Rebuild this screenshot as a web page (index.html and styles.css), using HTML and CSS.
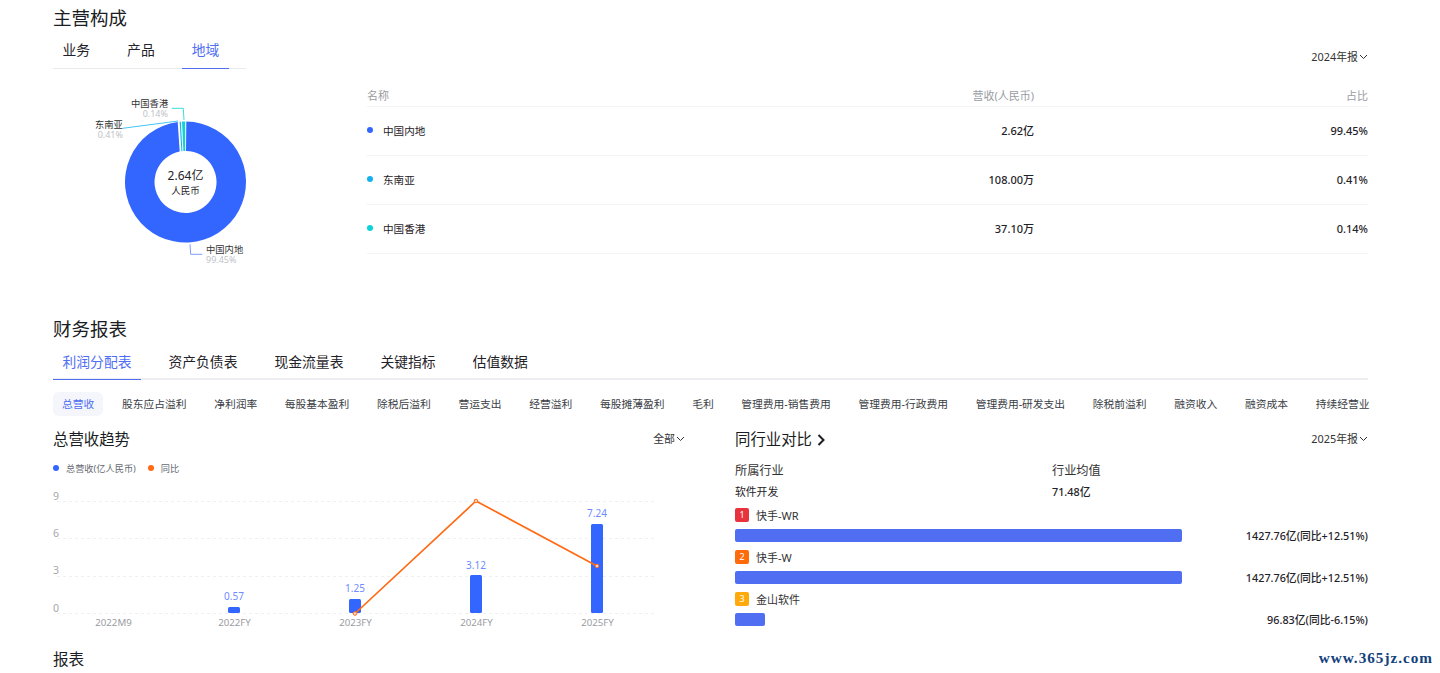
FILE: index.html
```html
<!DOCTYPE html>
<html lang="zh">
<head>
<meta charset="utf-8">
<title>主营构成</title>
<link rel="stylesheet" href="styles.css">
</head>
<body>
<main class="page">
  <section class="composition">
    <h2 class="section-title">主营构成</h2>
    <div class="comp-body">
      <div class="comp-left">
        <nav class="tabs tabs-small">
          <span class="tab">业务</span>
          <span class="tab">产品</span>
          <span class="tab active">地域</span>
        </nav>
        <svg class="donut" viewBox="53 69 200 210" width="200" height="210">
          <path d="M186.3 121.5 A60.5 60.5 0 1 1 177.7 122 L179.7 151.55 A31 31 0 1 0 186 151 Z" fill="#3366ff"/>
          <path d="M179.6 121.8 L180.9 121.7 L182.4 151.2 L181.4 151.3 Z" fill="#19b5f1"/>
          <path d="M182 121.6 L185.2 121.5 L185.2 151 L183.4 151.1 Z" fill="#0cd3d8"/>
          <polyline class="leader" points="171.7,108.3 183.3,108.3 184,120" stroke="#36dde0"/>
          <polyline class="leader" points="122.7,128.3 168.3,122.3 178,121" stroke="#43c6f5"/>
          <polyline class="leader" points="190,244.3 190.7,254.3 202.3,254.3" stroke="#7d9dff"/>
          <text class="d-name" x="131" y="106.5">中国香港</text>
          <text class="d-pct" x="168" y="116.5" text-anchor="end">0.14%</text>
          <text class="d-name" x="95" y="127.5">东南亚</text>
          <text class="d-pct" x="123" y="137.5" text-anchor="end">0.41%</text>
          <text class="d-name" x="206" y="252.5">中国内地</text>
          <text class="d-pct" x="206" y="262.5">99.45%</text>
          <text class="d-total" x="185.5" y="179.5" text-anchor="middle">2.64亿</text>
          <text class="d-unit" x="185.5" y="193.5" text-anchor="middle">人民币</text>
        </svg>
      </div>
      <div class="comp-right">
        <div class="select select-top">2024年报<svg class="chev" viewBox="0 0 9 6" width="9" height="6"><path d="M1 1l3.5 3.5L8 1"/></svg></div>
        <div class="comp-table">
          <div class="row head"><span>名称</span><span class="num">营收(人民币)</span><span class="num">占比</span></div>
          <div class="row"><span class="name"><i class="dot dot-blue"></i>中国内地</span><b class="num">2.62亿</b><b class="num">99.45%</b></div>
          <div class="row"><span class="name"><i class="dot dot-sky"></i>东南亚</span><b class="num">108.00万</b><b class="num">0.41%</b></div>
          <div class="row"><span class="name"><i class="dot dot-teal"></i>中国香港</span><b class="num">37.10万</b><b class="num">0.14%</b></div>
        </div>
      </div>
    </div>
  </section>

  <section class="finance">
    <h2 class="section-title">财务报表</h2>
    <nav class="tabs tabs-wide">
      <span class="tab active">利润分配表</span>
      <span class="tab">资产负债表</span>
      <span class="tab">现金流量表</span>
      <span class="tab">关键指标</span>
      <span class="tab">估值数据</span>
    </nav>
    <div class="chips">
      <span class="chip active">总营收</span>
      <span class="chip">股东应占溢利</span>
      <span class="chip">净利润率</span>
      <span class="chip">每股基本盈利</span>
      <span class="chip">除税后溢利</span>
      <span class="chip">营运支出</span>
      <span class="chip">经营溢利</span>
      <span class="chip">每股摊薄盈利</span>
      <span class="chip">毛利</span>
      <span class="chip">管理费用-销售费用</span>
      <span class="chip">管理费用-行政费用</span>
      <span class="chip">管理费用-研发支出</span>
      <span class="chip">除税前溢利</span>
      <span class="chip">融资收入</span>
      <span class="chip">融资成本</span>
      <span class="chip">持续经营业</span>
    </div>
    <div class="columns">
      <div class="trend">
        <div class="head-line">
          <h3 class="sub-title">总营收趋势</h3>
          <div class="select">全部<svg class="chev" viewBox="0 0 9 6" width="9" height="6"><path d="M1 1l3.5 3.5L8 1"/></svg></div>
        </div>
        <div class="legend">
          <span class="legend-item"><i class="dot dot-blue"></i>总营收(亿人民币)</span>
          <span class="legend-item"><i class="dot dot-orange"></i>同比</span>
        </div>
        <svg class="chart" viewBox="53 485 610 145" width="610" height="145">
          <g class="grid">
            <line x1="57" x2="656" y1="501.5" y2="501.5"/>
            <line x1="57" x2="656" y1="538.5" y2="538.5"/>
            <line x1="57" x2="656" y1="576.5" y2="576.5"/>
            <line x1="57" x2="656" y1="613.5" y2="613.5"/>
          </g>
          <g class="y-axis">
            <text x="53" y="500">9</text>
            <text x="53" y="537">6</text>
            <text x="53" y="574">3</text>
            <text x="53" y="612">0</text>
          </g>
          <g class="bars">
            <rect x="228" y="607" width="12" height="6" rx="1.5"/>
            <rect x="349" y="599" width="12" height="14" rx="1.5"/>
            <rect x="470" y="575" width="12" height="38" rx="1.5"/>
            <rect x="591" y="524" width="12" height="89" rx="1.5"/>
          </g>
          <g class="bar-labels">
            <text x="234" y="600">0.57</text>
            <text x="355" y="592">1.25</text>
            <text x="476" y="569">3.12</text>
            <text x="597" y="517">7.24</text>
          </g>
          <polyline class="trend-line" points="355,613.5 476,501 597,566"/>
          <circle class="pt" cx="355" cy="613.5" r="1.8"/>
          <circle class="pt" cx="476" cy="501" r="1.8"/>
          <circle class="pt" cx="597" cy="566" r="1.8"/>
          <g class="x-axis">
            <text x="113.5" y="625.5">2022M9</text>
            <text x="234.5" y="625.5">2022FY</text>
            <text x="355.5" y="625.5">2023FY</text>
            <text x="476.5" y="625.5">2024FY</text>
            <text x="597.5" y="625.5">2025FY</text>
          </g>
        </svg>
      </div>
      <div class="peers">
        <div class="head-line">
          <h3 class="sub-title">同行业对比<svg class="title-chev" viewBox="0 0 8 12" width="8" height="12"><path d="M1.5 1l5 5-5 5"/></svg></h3>
          <div class="select">2025年报<svg class="chev" viewBox="0 0 9 6" width="9" height="6"><path d="M1 1l3.5 3.5L8 1"/></svg></div>
        </div>
        <div class="industry">
          <span class="ind-label">所属行业</span><span class="ind-label">行业均值</span>
          <span class="ind-value">软件开发</span><b class="ind-value">71.48亿</b>
        </div>
        <div class="peer">
          <div class="peer-name"><i class="rank rank-1">1</i>快手-WR</div>
          <div class="peer-bar"><span class="track"><i class="fill" style="width:447px"></i></span><b class="peer-val">1427.76亿(同比+12.51%)</b></div>
        </div>
        <div class="peer">
          <div class="peer-name"><i class="rank rank-2">2</i>快手-W</div>
          <div class="peer-bar"><span class="track"><i class="fill" style="width:447px"></i></span><b class="peer-val">1427.76亿(同比+12.51%)</b></div>
        </div>
        <div class="peer">
          <div class="peer-name"><i class="rank rank-3">3</i>金山软件</div>
          <div class="peer-bar"><span class="track"><i class="fill" style="width:30px"></i></span><b class="peer-val">96.83亿(同比-6.15%)</b></div>
        </div>
      </div>
    </div>
  </section>

  <h3 class="report-title">报表</h3>
</main>
<div class="watermark">www.365jz.com</div>
</body>
</html>
```

FILE: styles.css
```css
* { box-sizing: border-box; }
html, body { margin: 0; padding: 0; height: 673px; overflow: hidden; background: #fff; }
body {
  font-family: "Noto Sans", "Noto Sans CJK SC", sans-serif;
  color: #1f2329;
  position: relative;
}
.page { padding: 5px 72px 0 53px; }
.section-title { margin: 0; font-size: 18.5px; line-height: 25px; font-weight: 400; color: #1a1d24; }
.sub-title { margin: 0; font-size: 15.4px; line-height: 22px; font-weight: 400; color: #1a1d24; display: flex; align-items: center; }
.report-title { margin: 18px 0 0; font-size: 15.6px; line-height: 22px; font-weight: 400; color: #1a1d24; }

.composition { height: 311px; }
.comp-body { display: flex; }
.comp-left { width: 314px; flex: none; }
.comp-right { flex: 1; }

.tabs { display: flex; gap: 18px; }
.tab { font-size: 13.8px; padding: 0 9.5px; color: #1f2329; border-bottom: 2px solid transparent; margin-bottom: -1px; white-space: nowrap; }
.tab.active { color: #4f6ef2; border-bottom-color: #4f6ef2; border-bottom-width: 1.5px; }
.tabs-small { width: 193px; height: 39px; align-items: flex-end; border-bottom: 1px solid #e8e9ec; }
.tabs-small .tab { height: 30px; line-height: 22px; }
.tabs-wide { height: 32px; margin-top: 7px; border-bottom: 2px solid #eceef1; }
.tabs-wide .tab { height: 32px; line-height: 28px; margin-bottom: -2px; }
.donut { display: block; }

.select { font-size: 10.9px; line-height: 16px; color: #333; display: flex; align-items: center; gap: 1px; }
.select-top { justify-content: flex-end; margin: 19px 0 19px; }
.head-line .select { margin-bottom: 2px; }
.chev { fill: none; stroke: #333; stroke-width: 1; }

.comp-table { display: flex; flex-direction: column; }
.row { display: grid; grid-template-columns: 440px 227px 334px; align-items: center; height: 49px; padding-bottom: 2px; border-bottom: 1px solid #f2f3f5; font-size: 11px; color: #1f2329; }
.row.head { height: 23px; padding-bottom: 0; color: #999ca3; }
.row b { font-weight: 500; }
.num { text-align: right; }
.name { display: flex; align-items: center; gap: 10px; font-size: 10.6px; }
.dot { display: inline-block; width: 6px; height: 6px; border-radius: 50%; flex: none; }
.dot-blue { background: #3366ff; }
.dot-sky { background: #14b0ef; }
.dot-teal { background: #0cd3d8; }
.dot-orange { background: #ff6a13; }

.leader { fill: none; stroke-width: 1; }
.d-name { font-size: 9.3px; fill: #333; }
.d-pct { font-size: 9px; fill: #c0c2c7; }
.d-total { font-size: 12px; fill: #1f2329; }
.d-unit { font-size: 9.5px; fill: #1f2329; }

.chips { display: flex; gap: 9.7px; height: 24px; margin: 12px -4px 0 0; overflow: hidden; }
.chip { flex: none; font-size: 10.75px; line-height: 24px; padding: 0 9px; color: #3a3d44; border-radius: 6px; white-space: nowrap; }
.chip.active { background: #f4f6fb; color: #4f6ef2; }
.chip:last-child { padding-right: 0; }

.columns { display: flex; margin-top: 13px; }
.trend { width: 632px; flex: none; }
.peers { margin-left: 50px; flex: 1; }
.head-line { display: flex; justify-content: space-between; align-items: center; height: 22px; }
.title-chev { fill: none; stroke: #1a1d24; stroke-width: 2; margin-left: 5px; }

.legend { display: flex; gap: 12px; margin-top: 10px; height: 14px; align-items: center; }
.legend-item { display: flex; align-items: center; gap: 7px; font-size: 9.2px; color: #666a72; }
.chart { display: block; margin-top: 10px; }
.grid line { stroke: #eef0f2; stroke-dasharray: 3 3; }
.y-axis text { font-size: 10.5px; fill: #a6a8ad; }
.bars rect { fill: #3366ff; }
.bar-labels text { font-size: 10px; fill: #6e8cff; text-anchor: middle; }
.x-axis text { font-size: 9.7px; fill: #9a9ca2; text-anchor: middle; }
.trend-line { fill: none; stroke: #ff6a13; stroke-width: 1.7; }
.pt { fill: #ffd9c2; stroke: #ff6a13; stroke-width: 1; }

.industry { display: grid; grid-template-columns: 317px 1fr; margin-top: 11px; row-gap: 3px; }
.ind-label { font-size: 12.2px; line-height: 18px; color: #333; }
.ind-value { font-size: 10.8px; line-height: 18px; color: #1f2329; font-weight: 400; }
b.ind-value { font-weight: 500; }

.peer-name { display: flex; align-items: center; gap: 7px; font-size: 11px; height: 14px; margin-top: 8px; color: #333; }
.industry + .peer .peer-name { margin-top: 7px; }
.rank { width: 14px; height: 14px; border-radius: 2px; color: #fff; font-style: normal; font-size: 9px; line-height: 14px; text-align: center; }
.rank-1 { background: #e8323c; }
.rank-2 { background: #ff6a0a; }
.rank-3 { background: #ffa90a; }
.peer-bar { display: flex; justify-content: space-between; align-items: center; height: 13px; margin-top: 7px; }
.track { display: block; height: 13px; }
.fill { display: block; height: 13px; background: #4f6ef2; border-radius: 2px; }
.peer-val { font-size: 10.8px; font-weight: 500; color: #1f2329; white-space: nowrap; margin-bottom: 2px; }

.watermark {
  position: absolute; right: 7px; top: 649px;
  font-family: "Liberation Serif", serif; font-weight: 700; font-size: 15.2px; letter-spacing: 1px;
  color: #12427c;
}
```
